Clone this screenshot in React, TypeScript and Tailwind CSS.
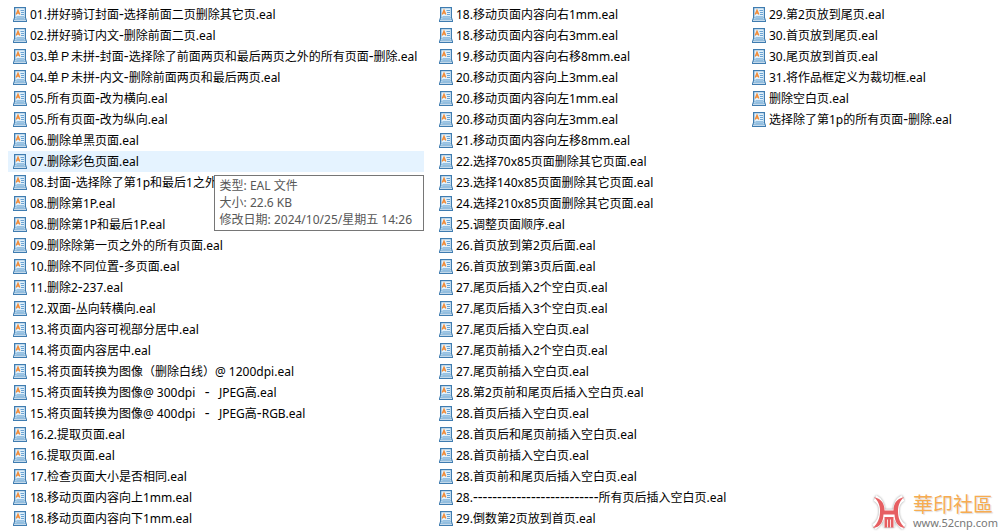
import React from "react";

interface FileEntry {
  name: string;
  hovered?: boolean;
}

const columns: FileEntry[][] = [
  [
    { name: "01.拼好骑订封面-选择前面二页删除其它页.eal" },
    { name: "02.拼好骑订内文-删除前面二页.eal" },
    { name: "03.单Ｐ未拼-封面-选择除了前面两页和最后两页之外的所有页面-删除.eal" },
    { name: "04.单Ｐ未拼-内文-删除前面两页和最后两页.eal" },
    { name: "05.所有页面-改为横向.eal" },
    { name: "05.所有页面-改为纵向.eal" },
    { name: "06.删除单黑页面.eal" },
    { name: "07.删除彩色页面.eal", hovered: true },
    { name: "08.封面-选择除了第1p和最后1之外" },
    { name: "08.删除第1P.eal" },
    { name: "08.删除第1P和最后1P.eal" },
    { name: "09.删除除第一页之外的所有页面.eal" },
    { name: "10.删除不同位置-多页面.eal" },
    { name: "11.删除2-237.eal" },
    { name: "12.双面-丛向转横向.eal" },
    { name: "13.将页面内容可视部分居中.eal" },
    { name: "14.将页面内容居中.eal" },
    { name: "15.将页面转换为图像（删除白线）@ 1200dpi.eal" },
    { name: "15.将页面转换为图像@ 300dpi   -   JPEG高.eal" },
    { name: "15.将页面转换为图像@ 400dpi   -   JPEG高-RGB.eal" },
    { name: "16.2.提取页面.eal" },
    { name: "16.提取页面.eal" },
    { name: "17.检查页面大小是否相同.eal" },
    { name: "18.移动页面内容向上1mm.eal" },
    { name: "18.移动页面内容向下1mm.eal" }
  ],
  [
    { name: "18.移动页面内容向右1mm.eal" },
    { name: "18.移动页面内容向右3mm.eal" },
    { name: "19.移动页面内容向右移8mm.eal" },
    { name: "20.移动页面内容向上3mm.eal" },
    { name: "20.移动页面内容向左1mm.eal" },
    { name: "20.移动页面内容向左3mm.eal" },
    { name: "21.移动页面内容向左移8mm.eal" },
    { name: "22.选择70x85页面删除其它页面.eal" },
    { name: "23.选择140x85页面删除其它页面.eal" },
    { name: "24.选择210x85页面删除其它页面.eal" },
    { name: "25.调整页面顺序.eal" },
    { name: "26.首页放到第2页后面.eal" },
    { name: "26.首页放到第3页后面.eal" },
    { name: "27.尾页后插入2个空白页.eal" },
    { name: "27.尾页后插入3个空白页.eal" },
    { name: "27.尾页后插入空白页.eal" },
    { name: "27.尾页前插入2个空白页.eal" },
    { name: "27.尾页前插入空白页.eal" },
    { name: "28.第2页前和尾页后插入空白页.eal" },
    { name: "28.首页后插入空白页.eal" },
    { name: "28.首页后和尾页前插入空白页.eal" },
    { name: "28.首页前插入空白页.eal" },
    { name: "28.首页前和尾页后插入空白页.eal" },
    { name: "28.--------------------------所有页后插入空白页.eal" },
    { name: "29.倒数第2页放到首页.eal" }
  ],
  [
    { name: "29.第2页放到尾页.eal" },
    { name: "30.首页放到尾页.eal" },
    { name: "30.尾页放到首页.eal" },
    { name: "31.将作品框定义为裁切框.eal" },
    { name: "删除空白页.eal" },
    { name: "选择除了第1p的所有页面-删除.eal" }
  ]
];

function FileIcon() {
  return (
    <svg className="h-4 w-4 shrink-0" viewBox="0 0 16 16" aria-hidden="true">
      <path d="M2 0h12v10.500l1 3V15H1v-1.500l1-3z" fill="#3f7cb0" />
      <path d="M3.300 1.200H12.800v9.300H3.300z" fill="#e0f1fc" />
      <path d="M3.100 10.500H12.900l.8 2.300H2.300z" fill="#b3d5ed" />
      <path d="M2 13.500h12" stroke="#e4f1fa" strokeWidth=".8" />
      <path d="M4.200 7.500L6 3.200l1.800 4.300M5 6.200h2" fill="none" stroke="#f28c38" strokeWidth="1.300" />
      <path d="M8.500 3.500H12M9 5.500h3M9 7.500h3" stroke="#5c98cd" strokeWidth=".9" />
      <path d="M4.500 9.500h7.500M4.500 11.500h7.500" stroke="#8dbbe0" strokeWidth=".9" />
    </svg>
  );
}

function FileName({ name }: { name: string }) {
  return (
    <span className="whitespace-pre">
      {name.split(/(-+)/).map((part, index) =>
        part.startsWith("-") ? (
          <span key={index} className="text-[15px] leading-none">{part}</span>
        ) : (
          part
        )
      )}
    </span>
  );
}

function FileTooltip() {
  return (
    <div
      role="tooltip"
      className="absolute top-6 right-0 z-10 whitespace-nowrap border border-[#767676] bg-white pt-[1px] pr-[11px] pb-[2px] pl-[5px] leading-[17px] text-[#575757]"
    >
      <p>类型: EAL 文件</p>
      <p>大小: 22.6 KB</p>
      <p>修改日期: 2024/10/25/星期五 14:26</p>
    </div>
  );
}

function FileRow({ file }: { file: FileEntry }) {
  return (
    <li className={`relative flex h-[21px] items-center gap-[2px] pl-1 ${file.hovered ? "bg-[#e5f3ff]" : ""}`}>
      <FileIcon />
      <FileName name={file.name} />
      {file.hovered && <FileTooltip />}
    </li>
  );
}

function SiteMark() {
  return (
    <a href="#" className="absolute right-1 bottom-0 flex items-center gap-[6px]">
      <svg className="h-9 w-9 drop-shadow-[0_0_1px_#999]" viewBox="0 0 36 36" aria-hidden="true">
        <path
          d="M4 3C10 6 11 11 11 16 11 23 9 28 3 32M32 3C26 6 25 11 25 16 25 23 27 28 33 32M11 17.500h14M15.500 32v-9h5v9"
          fill="none"
          stroke="#fff"
          strokeWidth="6"
        />
        <path
          d="M3 2c8 2 10.500 7 10.500 13.500h9C22.500 9 25 4 33 2c-4 4-6 8-6 14 0 7 2 12 7 17-7-1-10-5-10.500-13.500h-11C12 28 9 32 2 33c5-5 7-10 7-17 0-6-2-10-6-14z"
          fill="#e65f62"
        />
        <path d="M13.500 22h9v10.500H20V24.500h-.8v8h-2.400v-8H16v8h-2.500z" fill="#e65f62" />
      </svg>
      <span className="block">
        <span className="block text-xl leading-5 text-[#f7ac51] [text-shadow:1px_1px_1px_#ddd]">華印社區</span>
        <span className="block text-[11px] leading-4 text-[#777]">www.52cnp.com</span>
      </span>
    </a>
  );
}

export default function App() {
  return (
    <main className="relative min-h-screen overflow-hidden bg-white pt-1 pl-2 font-['Noto_Sans','Noto_Sans_CJK_SC',sans-serif] text-xs text-black">
      <div className="grid grid-cols-[416fr_303fr_255fr] gap-[10px]">
        {columns.map((files, index) => (
          <ul key={index} className="min-w-0">
            {files.map((file) => (
              <FileRow key={file.name} file={file} />
            ))}
          </ul>
        ))}
      </div>
      <SiteMark />
    </main>
  );
}
